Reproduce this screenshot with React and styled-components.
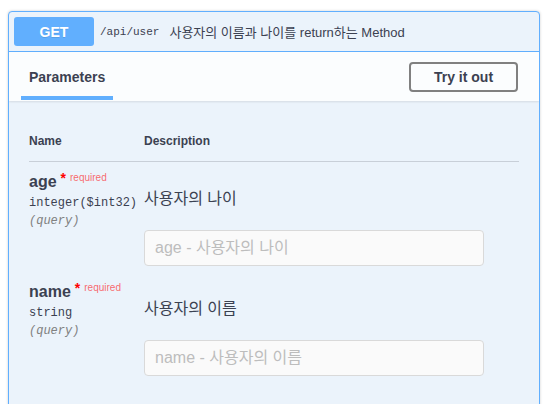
import React from "react";
import styled, { createGlobalStyle } from "styled-components";

const GlobalStyle = createGlobalStyle`
  body {
    margin: 0;
    background: #ffffff;
    font-family: "Liberation Sans", "Noto Sans CJK KR", sans-serif;
    color: #3b4151;
  }
`;

const Page = styled.div`
  padding: 11px 4px 0 8px;
`;

const Opblock = styled.div`
  border: 1px solid #61affe;
  border-radius: 4px;
  background: #ebf3fb;
  box-shadow: 0 0 3px rgba(0, 0, 0, 0.19);
  overflow: hidden;
`;

const Summary = styled.div`
  display: flex;
  align-items: center;
  padding: 5px;
  border-bottom: 1px solid #61affe;
`;

const Method = styled.span`
  min-width: 80px;
  height: 29px;
  display: flex;
  align-items: center;
  justify-content: center;
  background: #61affe;
  color: #fff;
  border-radius: 3px;
  font-size: 14px;
  font-weight: 700;
  text-shadow: 0 1px 0 rgba(0, 0, 0, 0.1);
`;

const Path = styled.span`
  margin-left: 6px;
  font-family: "Liberation Mono", monospace;
  font-size: 11px;
  font-weight: 400;
  color: #3b4151;
`;

const SummaryDesc = styled.span`
  margin-left: 10px;
  font-size: 13px;
  color: #3b4151;
`;

const SectionHeader = styled.div`
  display: flex;
  align-items: center;
  justify-content: space-between;
  height: 49px;
  padding: 0 21px 0 12px;
  background: rgba(255, 255, 255, 0.8);
  box-shadow: 0 1px 2px rgba(0, 0, 0, 0.1);
`;

const Tab = styled.div`
  position: relative;
  align-self: stretch;
  display: flex;
  align-items: center;
  padding: 0 8px;
  font-size: 14px;
  font-weight: 700;
  color: #3b4151;

  &::after {
    content: "";
    position: absolute;
    left: 0;
    right: 0;
    bottom: 1px;
    height: 4px;
    background: #61affe;
  }
`;

const TryButton = styled.button`
  width: 109px;
  height: 30px;
  border: 2px solid #808080;
  border-radius: 4px;
  background: transparent;
  font-family: "Liberation Sans", sans-serif;
  font-size: 14px;
  font-weight: 700;
  color: #3b4151;
  cursor: pointer;
`;

const TableBox = styled.div`
  padding: 20px 20px 40px 20px;
`;

const Grid = styled.div`
  display: grid;
  grid-template-columns: 115px 1fr;
`;

const HeadCell = styled.div`
  padding: 13px 0 13px;
  font-size: 12px;
  font-weight: 700;
  color: #3b4151;
  border-bottom: 1px solid rgba(59, 65, 81, 0.2);
`;

const NameCell = styled.div`
  padding: 10px 0 6px;
`;

const ParamName = styled.div`
  font-size: 16px;
  font-weight: 700;
  color: #3b4151;
  line-height: 20px;

  & span {
    position: relative;
    top: -6px;
    margin-left: 4px;
    font-size: 10px;
    color: rgba(255, 0, 0, 0.6);
    font-weight: 400;
  }

  & b {
    position: relative;
    top: -4px;
    margin-left: 4px;
    color: #f00;
    font-size: 14px;
  }
`;

const ParamType = styled.div`
  margin-top: 1px;
  font-family: "Liberation Mono", monospace;
  font-size: 12px;
  color: #3b4151;
  line-height: 16px;
`;

const ParamIn = styled.div`
  margin-top: 2px;
  font-family: "Liberation Mono", monospace;
  font-size: 12px;
  font-style: italic;
  color: #808080;
  line-height: 16px;
`;

const DescCell = styled.div`
  padding: 27px 0 6px;
`;

const DescText = styled.p`
  margin: 0;
  font-size: 16px;
  line-height: 20px;
  color: #3b4151;
`;

const Input = styled.input`
  display: block;
  box-sizing: border-box;
  margin-top: 21px;
  width: 340px;
  height: 36px;
  padding: 8px 10px;
  border: 1px solid #d9d9d9;
  border-radius: 4px;
  background: #fafafa;
  font-family: "Liberation Sans", "Noto Sans CJK KR", sans-serif;
  font-size: 16px;
  color: #3b4151;
  outline: none;

  &::placeholder {
    color: #bdbdbd;
  }
`;

const params = [
  { name: "age", type: "integer", format: "($int32)", desc: "사용자의 나이" },
  { name: "name", type: "string", format: "", desc: "사용자의 이름" },
];

export default function App() {
  return (
    <Page>
      <GlobalStyle />
      <Opblock>
        <Summary>
          <Method>GET</Method>
          <Path>/api/user</Path>
          <SummaryDesc>사용자의 이름과 나이를 return하는 Method</SummaryDesc>
        </Summary>
        <SectionHeader>
          <Tab>Parameters</Tab>
          <TryButton>Try it out</TryButton>
        </SectionHeader>
        <TableBox>
          <Grid>
            <HeadCell>Name</HeadCell>
            <HeadCell>Description</HeadCell>
            {params.map((p) => (
              <React.Fragment key={p.name}>
                <NameCell>
                  <ParamName>
                    {p.name}
                    <b>*</b>
                    <span>required</span>
                  </ParamName>
                  <ParamType>
                    {p.type}
                    {p.format}
                  </ParamType>
                  <ParamIn>(query)</ParamIn>
                </NameCell>
                <DescCell>
                  <DescText>{p.desc}</DescText>
                  <Input placeholder={`${p.name} - ${p.desc}`} />
                </DescCell>
              </React.Fragment>
            ))}
          </Grid>
        </TableBox>
      </Opblock>
    </Page>
  );
}
